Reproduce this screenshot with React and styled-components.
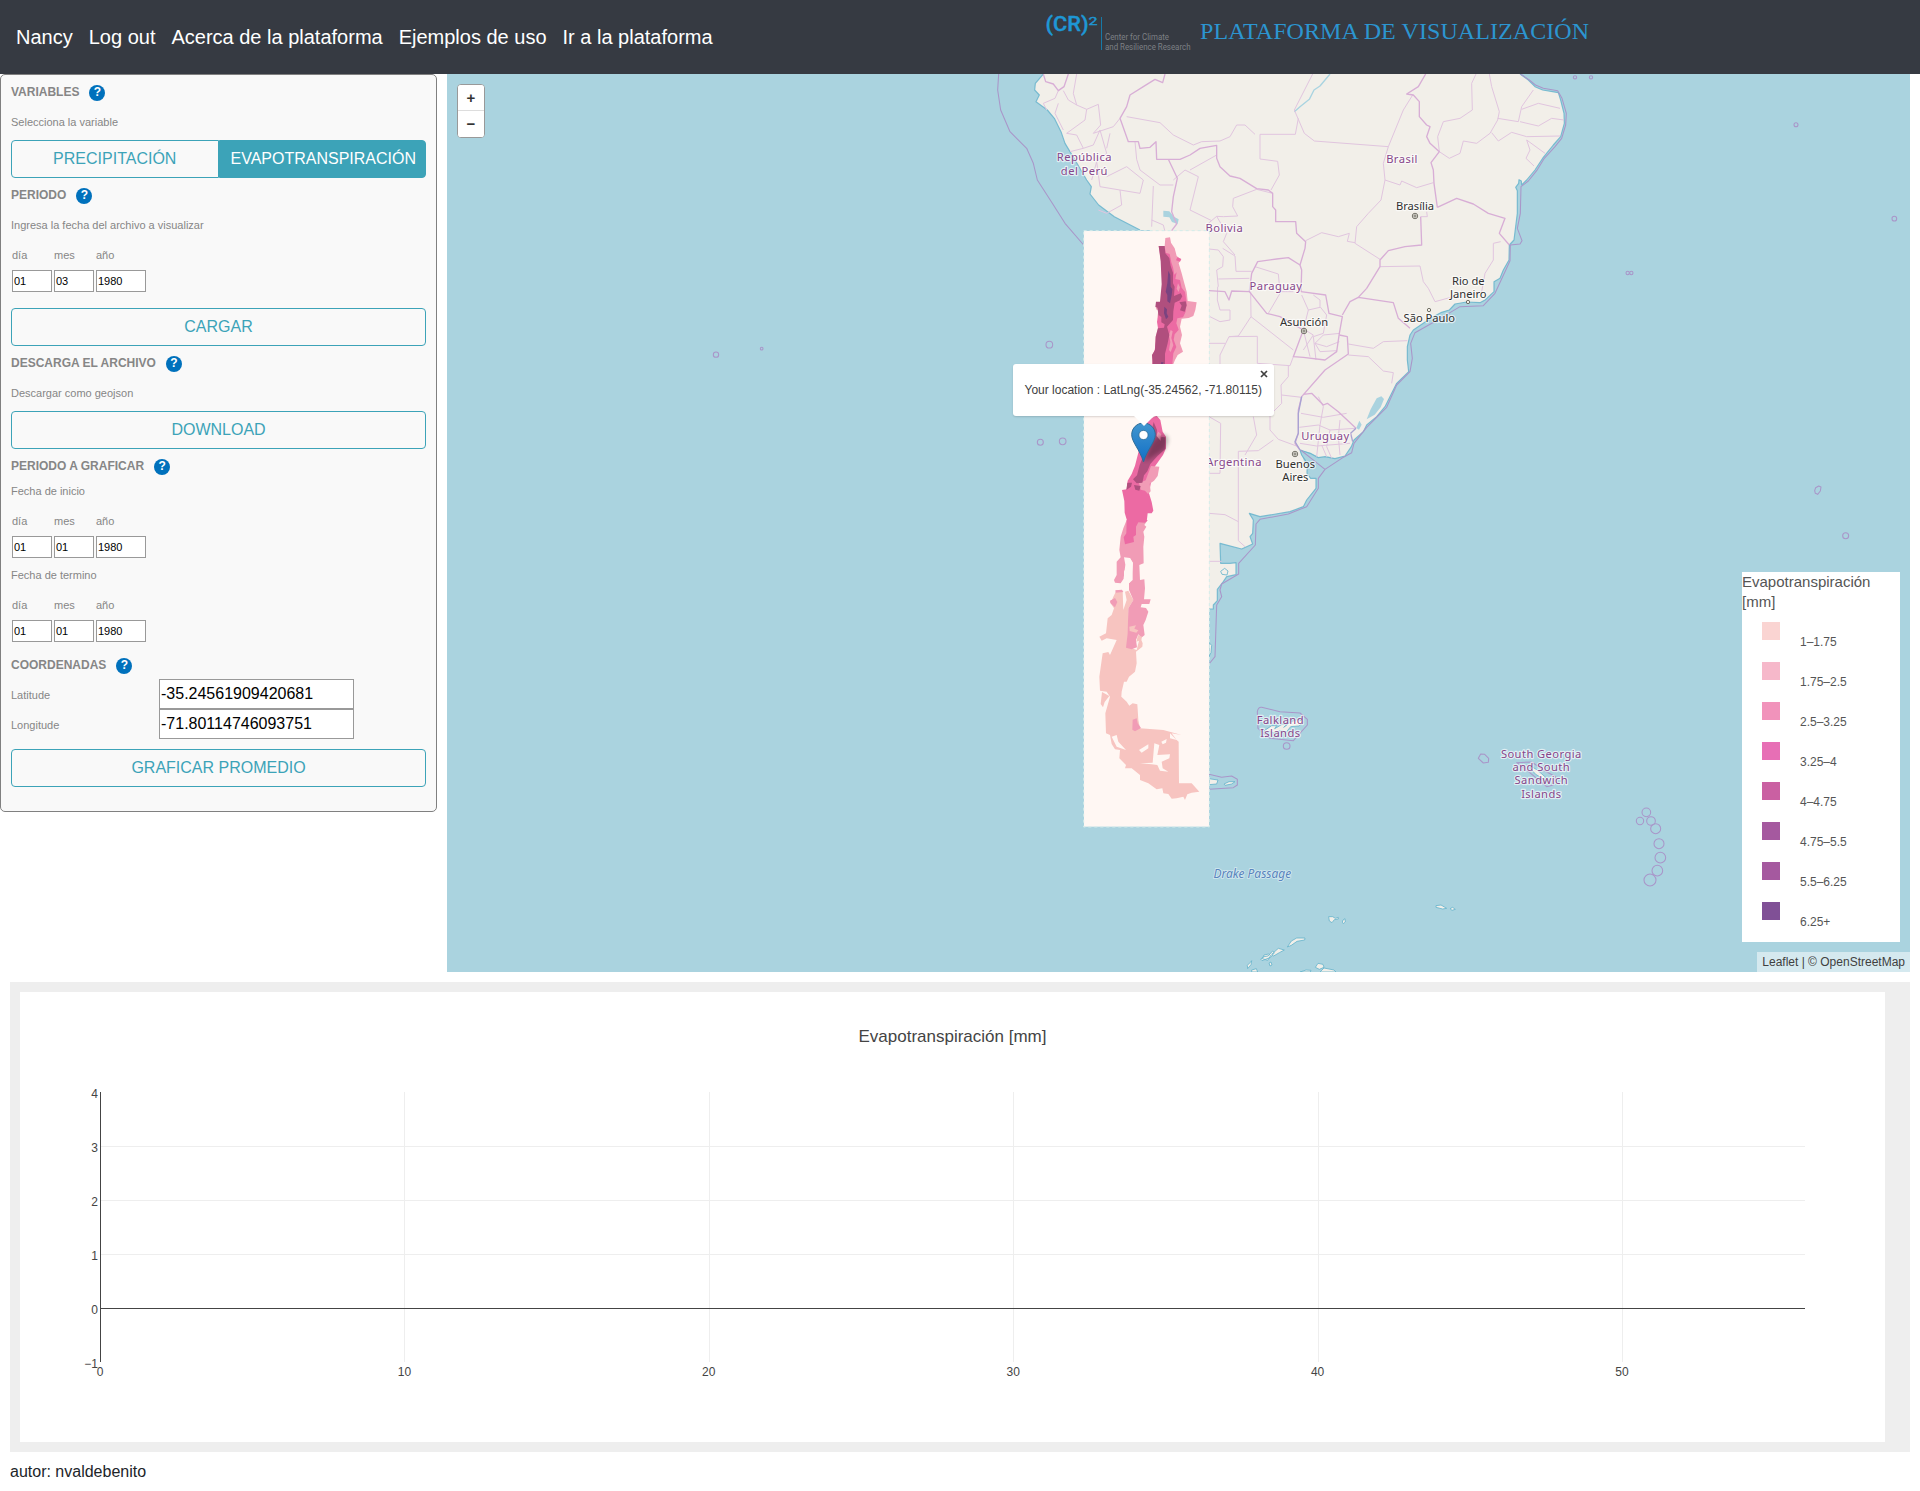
import React from 'react';
import styled, { createGlobalStyle, css } from 'styled-components';

const GlobalStyle = createGlobalStyle`
  *, *::before, *::after { box-sizing: border-box; }
  body { margin: 0; background: #fff; color: #212529; font: 16px/1.5 "Liberation Sans", Arial, sans-serif; }
  button, input { font-family: inherit; }
`;

const NavBar = styled.nav`
  display: flex; align-items: center; height: 74px; padding-left: 8px; background: #363a42;
`;
const NavLinks = styled.div`
  display: flex; width: 1038px;
`;
const NavLink = styled.a`
  padding: 0 8px; color: #fff; font-size: 20px; line-height: 30px; white-space: nowrap;
`;
const Brand = styled.div`
  display: flex; align-items: flex-start; height: 74px;
`;
const LogoArt = styled.svg`
  display: block; width: 154px; height: 60px; flex: none; overflow: visible;
`;
const BrandTitle = styled.span`
  padding-top: 13px; color: #2c95d0; font: 24px/36px "Liberation Serif", "Times New Roman", serif;
  letter-spacing: 0.08px; white-space: nowrap;
`;

const Workspace = styled.main`
  display: flex; align-items: flex-start; gap: 10px; width: 1910px;
`;
const Panel = styled.aside`
  display: flex; flex-direction: column; width: 437px; height: 738px; flex: none;
  padding: 0 10px 24px; border: 1px solid #808080; border-radius: 5px; background: #f9f9f9; color: #868686;
`;
const Heading = styled.h2`
  display: flex; align-items: center; gap: 10px; margin: ${p => (p.$tight ? '8px 0 0' : '0')};
  height: ${p => (p.$tight ? 29 : 34)}px; flex: none; font-size: 12px; font-weight: 700; line-height: 18px;
`;
const Help = styled.span`
  display: flex; justify-content: center; width: 16px; height: 16px; margin-top: 2px; border-radius: 50%;
  background: #0071bc; color: #fff; font-size: 12px; line-height: 14px;
`;
const Hint = styled.p`
  margin: 0 0 ${p => (p.$flush ? 0 : 5)}px; height: 26px; font-size: 11px; line-height: 26px; flex: none;
`;
const DateHint = styled(Hint)`
  height: 16px; line-height: 16px; margin-top: ${p => (p.$spaced ? 9 : 0)}px;
`;
const DateGrid = styled.div`
  display: grid; grid-template: 32px 22px / 40px 40px 50px; column-gap: 2px; padding-left: 1px;
  margin-bottom: ${p => p.$after || 0}px; font-size: 11px;
`;
const DateLabel = styled.label`
  padding-top: 2px; line-height: 30px;
`;
const field = css`
  border: 1px solid #999; border-radius: 0; background: #fff; color: #000; outline: 0; min-width: 0;
`;
const DateInput = styled.input`
  ${field} width: 100%; height: 22px; padding: 1px; font-size: 11px;
`;
const CoordRow = styled.div`
  display: flex; height: 30px; align-items: center; font-size: 11px;
`;
const CoordLabel = styled.label`
  width: 148px; padding-top: 2px;
`;
const CoordInput = styled.input`
  ${field} width: 195px; height: 30px; padding: 1px; font-size: 16px;
`;
const ButtonGroup = styled.div`
  display: flex; flex: none; margin-top: ${p => p.$top || 0}px;
`;
const Button = styled.button`
  flex: 1 1 0; min-width: 0; height: 38px; padding: 0 11px; border: 1px solid #3ca3b8; font-size: 16px;
  white-space: nowrap;
  background: ${p => (p.$active ? '#3ca3b8' : 'transparent')};
  color: ${p => (p.$active ? '#fff' : '#3ca3b8')};
  &:first-child { border-top-left-radius: 4px; border-bottom-left-radius: 4px; }
  &:last-child { border-top-right-radius: 4px; border-bottom-right-radius: 4px; }
`;

const MapFrame = styled.section`
  position: relative; flex: 1; height: 898px; overflow: hidden; background: #aad3df;
`;
const MapArt = styled.svg`
  display: block; width: 1463px; height: 898px;
`;
const ZoomControl = styled.div`
  position: absolute; left: 10px; top: 10px; width: 28px; height: 54px; border: 1px solid #999;
  border-radius: 4px; background: #fff; overflow: hidden;
`;
const ZoomButton = styled.button`
  display: block; width: 26px; height: 26px; padding: 0; border: 0; background: #fff;
  border-bottom: 1px solid ${p => (p.$last ? '#fff' : '#ddd')}; color: #333; font: 700 15px/24px "Liberation Sans", sans-serif;
`;
const Popup = styled.div`
  position: absolute; left: 566px; top: 290px; width: 261px; height: 52px; border-radius: 3px;
  background: #fff; color: #404040; font-size: 12px; line-height: 20px; padding: 16px 0 0 11.5px;
  box-shadow: 0 1px 2px rgba(0, 0, 0, 0.15); white-space: nowrap;
`;
const CloseIcon = styled.svg`
  position: absolute; right: 6px; top: 6px; width: 8px; height: 8px;
`;
const Tip = styled.svg`
  position: absolute; left: 121px; top: 52px; width: 20px; height: 10px;
`;
const MarkerIcon = styled.svg`
  position: absolute; left: 684px; top: 348px; width: 60px; height: 42px;
`;
const Legend = styled.div`
  position: absolute; right: 10px; bottom: 30px; width: 158px; height: 370px; background: #fff; color: #555;
`;
const LegendTitle = styled.div`
  height: 50px; font-size: 15px; line-height: 20px;
`;
const LegendItem = styled.div`
  display: flex; gap: 20px; height: 40px; padding-left: 20px; font-size: 12px; line-height: 40px;
`;
const Swatch = styled.i`
  width: 18px; height: 18px; background: ${p => p.$color};
`;
const Attribution = styled.div`
  position: absolute; right: 0; bottom: 0; height: 20px; padding: 0 5px; background: rgba(255, 255, 255, 0.5);
  color: #404040; font-size: 12px; line-height: 20px; white-space: nowrap;
`;

const ChartFrame = styled.section`
  width: 1900px; height: 470px; margin: 10px 0 0 10px; padding: 10px; background: #eee;
`;
const ChartArt = styled.svg`
  display: block; width: 1865px; height: 450px; background: #fff;
  text { font: 12px "Liberation Sans", Arial, sans-serif; fill: #444; }
  text.title { font-size: 17px; }
`;
const Footer = styled.footer`
  padding: 8px 10px 7px; line-height: 24px;
`;

const LEGEND = [
  ['1–1.75', '#fad4d2'], ['1.75–2.5', '#f6b8ca'], ['2.5–3.25', '#f193bb'], ['3.25–4', '#e76fb5'],
  ['4–4.75', '#ca60a2'], ['4.75–5.5', '#a5599f'], ['5.5–6.25', '#a5599f'], ['6.25+', '#805096'],
];

const Logo = () => (
  <LogoArt viewBox="1046 0 154 60">
    <g fill="#1e97d5" stroke="#1e97d5" strokeWidth="0.4" fontFamily="Roboto, sans-serif">
      <text x="1045.5" y="31" fontSize="20" fontWeight="500" textLength="43" lengthAdjust="spacingAndGlyphs">(CR)</text>
      <text x="1088.5" y="25" fontSize="11.5" fontWeight="400" textLength="9" lengthAdjust="spacingAndGlyphs">2</text>
    </g>
    <path d="M1101.5 17v33" stroke="#1779a7" />
    <g fill="#7d8085" fontFamily="Roboto, sans-serif" fontSize="9">
      <text x="1105" y="39.8" textLength="64" lengthAdjust="spacingAndGlyphs">Center for Climate</text>
      <text x="1105" y="49.8" textLength="85.5" lengthAdjust="spacingAndGlyphs">and Resilience Research</text>
    </g>
  </LogoArt>
);

const COAST_EAST = 'M930 12L955 30 975 50 998 60 1045 68 1052 90 1062 130 1063 160 1052 200 1030 225 1000 262 975 300 950 330 935 345 934 333 927 329 926 340 917 352 922 362 922 430 917 470 912 510 898 525 897 570 880 600 870 625 852 635 852 665 825 690 810 698 770 696 735 702 718 720 695 727 670 740 640 760 610 780 600 795 592 830 592 870 596 905 560 940 545 970 525 1010 500 1040 470 1065 460 1085 432 1110 424 1130 405 1158 375 1166 345 1160 325 1163 300 1150 270 1140';
const COAST_PLATA = 'L275 1155 292 1180 291 1210 302 1225 318 1225 318 1255 290 1290 280 1310 240 1325 150 1340 118 1330 130 1350 128 1390 120 1400 128 1422 95 1437 30 1420 32 1480 60 1480 78 1478 78 1514 50 1520 40 1535 22 1558 22 1592 10 1605 10 1617 -3 1617';
const COAST_WEST = '-210 480 -287 440 -334 405 -360 372 -356 350 -370 330 -393 290 -411 260 -435 220 -447 185 -467 145 -488 120 -522 95 -512 75 -526 60 -524 40 -500 12';

const BORDERS_THICK = [
  'M-500 12L-493 35-470 42-455 62-438 50-425 12M-135 12L-142 38-165 28-200 50-240 75-250 110-270 145-245 215-215 215-210 235-180 232-162 215-160 268-90 268-60 255-30 235 20 226 20 265 30 290 60 318 90 325 140 356 175 360 188 370 188 410 197 420 197 455 257 455 260 490 287 515 285 535 270 585 275 600 273 665',
  'M-125 268L-98 325-110 380-115 425-100 462-115 482M270 585L235 563 200 567 143 575 125 610 118 665 170 730 210 740 280 780 250 860 280 862 345 870 380 845 388 790 397 740 357 730 347 675 273 665',
  'M-3 662L45 665 57 690 65 663 118 665M388 795L412 800 415 852 345 900 275 980 265 1020 265 1090 255 1120 270 1140M280 973L305 970 340 1005 352 1000 385 1025 438 1075',
  'M647 12L625 50 590 72 610 75 628 95 628 140 650 165 660 170 650 200 660 220 688 245 663 278 670 300 672 340 682 412',
  'M682 412L740 385 790 402 835 430 885 445 868 490 898 525M632 440L635 525 585 530 535 542 510 570 510 590 470 655 445 682 420 695 397 735M445 682L550 698 565 745 600 775',
];
const BORDERS_THIN = [
  'M308 12L253 120 283 190 313 213 535 230 580 120 608 75M265 145L256 193 150 193 150 267 203 274 208 315 183 360M-250 140L-150 158-110 195-50 225-25 215 30 213 60 200 80 165 105 165 135 193',
  'M535 230L520 280 525 330 570 345 575 333 620 353 670 338M525 330L513 390 475 430 440 470 435 520 510 568M287 512L335 488 385 500 418 490 412 514 435 518',
  'M798 12L785 40 787 120 750 145 700 155 683 200 688 245 718 265 750 250 760 213 800 220 840 190 863 150 868 125 845 50 838 12M863 145L925 155 935 110 970 60M930 155L985 168 1025 145 1062 150M935 118L985 100 1050 115M845 188L865 213 905 187 950 200 1050 198M950 210L1005 250M950 210L960 240 948 265 972 288',
  'M510 590L630 588 640 635 655 655 675 695 730 680M872 515L850 520 850 570 825 610 815 665 780 675M632 440L652 440 650 425',
  'M415 822L490 835 520 815 592 812M415 855L475 860 520 903 550 908 545 940M275 675L295 720 280 780 300 860M310 675L330 690 330 710 350 735 340 790 310 800 318 870M295 720L330 712M390 790L340 795 315 820 350 830 388 815M315 820L330 845 380 842M285 780L310 795 280 840',
  'M-3 537L25 540 40 560 38 590 20 600 25 650M38 535L75 558 78 604 125 604M25 627L118 625M135 590L205 612 210 665M210 665L250 665M210 670L175 730M122 665L123 740 250 840M23 650L22 690 30 720 60 720 60 750 30 755 0 740M123 740L85 798 57 800 30 855 30 882M57 800L142 799 142 880 240 887 250 860M-3 820L45 820',
  'M235 887L235 920 213 945 215 1000 180 1035 180 1080 205 1108 265 1130M215 975L275 982M130 1040L140 1095 105 1155M-3 1040L32 1060 30 1210-3 1210M85 1570M85 1412L85 1144 145 1142 190 1110M-3 1330L45 1334 85 1355M85 1412L105 1430M-3 1474L35 1474',
  'M273 1030L340 1042 410 1030M268 1072L325 1065 360 1080 435 1075M325 980L340 1010 330 1065 320 1160M360 1080L350 1130 365 1165M390 1050L385 1100 390 1155M270 1120L320 1128 420 1120M335 1125L350 1160',
  'M188 370L140 358 70 385 68 410 83 438 40 440 20 439-5 460M20 439L50 490 40 515 75 555',
  'M-400 12L-410 70-400 105-370 118-335 103-328 165-350 190-290 170-270 145M-400 105L-425 90-440 62M-455 62L-465 85-500 100-490 120M-370 118L-375 150-430 190M-430 190L-400 195-380 235-420 245M-380 235L-350 225-330 180-310 250-340 275-355 330M-440 180L-465 130-455 100M-310 235L-300 190M-340 275L-330 350-270 360-265 405-310 430-335 420M-270 360L-210 370-200 330-250 290-310 320M-220 268L-210 300-150 345-110 345M-170 348L-175 470M-110 330L-75 300-35 320-60 420 5 452M-60 300L20 255M-175 450L-140 465-135 485M-225 215L-220 268',
];
const MARITIME = [
  'M-634 12L-637 60-628 120-600 185-550 235-530 280-518 330-474 398-435 460-379 525',
  'M932 12L958 30 978 46 1000 55 1043 62 1056 85 1069 130 1067 165 1055 205 1035 230 1003 265 980 302 955 333 933 350 931 430 922 475 936 512 930 522 901 525 900 572 885 605 855 670 820 707 750 710 700 740 615 788 602 820 607 865 600 905 560 945 530 1012 470 1072 432 1120 425 1148 395 1165 345 1198 272 1140',
  'M345 1198L325 1225 325 1255 290 1310 235 1332 150 1348 138 1362 136 1425 86 1480 86 1512 35 1542 30 1560 35 1580 20 1605 15 1760-3 1782',
  'M-3 2113L35 2122 65 2118 82 2128 82 2145 70 2153-3 2158M142 1925Q145 1910 155 1912L210 1925 270 1929 292 1948 292 1965 250 2012 180 2005 144 1975Z',
  'M805 2065l7-13 12 1 12 12-1 12-15 2ZM935 2088L920 2078 965 2076 1005 2103 1037 2120 1030 2145 1010 2150Z',
  'M1814 1262l3-9 9-5 7 3-2 12-8 10-7-3Z',
];
const ISLETS = [
  [1309, 2227, 13], [1290, 2253, 11], [1323, 2253, 13], [1337, 2276, 15], [1347, 2321, 15],
  [1351, 2363, 16], [1342, 2402, 16], [1320, 2430, 18], [-509, 1117, 9], [-442, 1114, 10], [-482, 824, 10],
  [-1482, 854, 8], [-1345, 836, 4], [1758, 164, 6], [2053, 446, 7], [1907, 1397, 9], [1095, 22, 5], [1143, 22, 5],
  [230, 2028, 10], [1253, 609, 5], [1264, 609, 5],
];

const COUNTRIES = [
  [-377, 274, ['República', 'del Perú']], [576, 280, ['Brasil']], [43, 486, ['Bolivia']], [198, 661, ['Paraguay']],
  [346, 1109, ['Uruguay']], [72, 1189, ['Argentina']], [211, 1961, ['Falkland', 'Islands']],
  [994, 2063, ['South Georgia', 'and South', 'Sandwich', 'Islands']],
];
const CITIES = [
  [615, 420, ['Brasília']], [775, 645, ['Rio de', 'Janeiro']], [658, 757, ['São Paulo']],
  [282, 767, ['Asunción']], [256, 1194, ['Buenos', 'Aires']],
];

function PlaceLabels({ places, color, spacing }) {
  return places.map(([x, y, lines]) => (
    <text key={lines[0]} textAnchor="middle" fill={color} fontSize="33.5" letterSpacing={spacing}
      stroke="#fff" strokeOpacity="0.65" strokeWidth="7" strokeLinejoin="round" paintOrder="stroke" fontFamily='"Noto Sans", sans-serif'>
      {lines.map((line, i) => <tspan key={line} x={x} y={y + i * 40.2}>{line}</tspan>)}
    </text>
  ));
}

function RasterLayer() {
  return (
    <g>
      <rect x="-378" y="483" width="375" height="1787" fill="#fff7f3" />
      <rect x="-379" y="482" width="377" height="1789" fill="none" stroke="#d4ecea" strokeWidth="3" strokeDasharray="9 9" />
      <g transform="translate(-630 450)">
        <path fill="#f19cb6" d="M496 54l14-2 3 16 11 17 6 23 13 10-7 12 9 30 8 30 7 25 3 28 27 4-4 23-6 18-14 6-21 2-5 24 6 25-6 25 9 25-16 10-8 15-5 12-62 0-2-27 9-15 2-40 8-30-3-25 3-25-7-2 2-16 12 0 5-52-3-70-8-52 18 0Z" />
        <path fill="#ec6aa3" d="M494 78l3 20 12 4 5 25 5 15 4 22 7-7-4 20 14 3 5 23 10 13 5 31-3 28-8 17-17 3-3 15 7 19-12 14-3 16 8 22-9 19-3 32-60 0 20-120 10-100Z" />
        <path fill="#ec6aa3" d="M532 112l12 5-4 8-12-4Z" />
        <path fill="#f19cb6" d="M512 330l6 4-4 20 6 22-8 20-5-6 4-24-4-20ZM534 190l6 12-4 14-6-10Z" />
        <path fill="#b04f7e" d="M476 78l18 0 2 22 12 14 4 24 7 20 0 32 5 10-2 28 20-8 5 9-7 12-16 7-4 26-1 26-18 20 7 25-5 25-8 31 0 31-37 0-2-27 9-15 2-40 8-30 1-25-2-20-2-12-6-2 2-16 12 0 5-52-3-70Z" />
        <path fill="#ec6aa3" d="M476 285l8 6 0 16 10 6-2 10-18 2-3-20Z" />
        <path fill="#b04f7e" d="M538 247l19-3 3 12-6 19-14-4 5-14Z" />
        <path fill="#7a4380" d="M505 152l6 13 1 35 5 8-2 18-5 24-8-6 0-19-5-10 5-25ZM493 260l8 8-1 12 5 10-7 8-6-18ZM483 427l8 0-3 7-5-2Z" />
        <path fill="#ec6aa3" d="M440 600l30-13 11 13 7 35 10 15 0 35-9 20-25 35-7 25-10 55 8 26 5 26-5 8-12 0-3 25-57 3-9-30-1-35-7-33 14-2 3-26 12-20 10-25Z" />
        <path fill="#f19cb6" d="M475 635l9 8-7 20-14-7ZM453 738l25 2-5 28-11 14-13 9 3 23-8 8-9-10-13-3-5-20 20-8Z" />
        <path fill="#b04f7e" d="M461 606l10 24-1 18 12 15 2-12 12 1 0 35-23 20-22 25-9 22-10 12-5 22-17 2-11-12 12-12 8-31 25-60ZM382 788l14 0-3 12-14 10ZM402 795l20 3-4 14-12-3Z" />
      </g>
      <g transform="translate(-630 1350)">
        <path fill="#f7c4c0" fillRule="evenodd" d="M340 230L350 210 368 215 370 270 380 240 375 215 385 212 400 240 385 265 385 300 383 380 410 390 420 350 428 370 427 380 408 395 410 430 405 455 387 470 380 485 372 485 365 515 364 530 380 545 388 557 398 550 412 553 415 600 420 625 490 630 545 645 515 640 530 660 536 665 537 790 575 790 598 815 575 818 562 823 555 840 550 830 530 835 515 836 505 822 490 820 487 805 470 808 445 790 420 780 420 765 395 745 375 745 378 735 358 715 360 690 345 688 335 672 330 645 318 640 316 580 330 530 320 515 300 512 298 470 308 400 325 396 330 405 350 360 320 355 305 362 298 350 318 340 323 295 335 285 342 265 332 250ZM417 690L445 673 445 685 425 698ZM463 670L478 675 472 705 510 703 508 715 485 725 488 745 505 755 480 752 472 735 455 733 420 730 458 728ZM484 665L500 657 498 668 488 673ZM335 650L350 645 355 665 378 690 350 680ZM510 640L530 660 510 655Z" />
        <path fill="#f7c4c0" d="M306 516l22 12-14 18-5 16-7-10Z" />
        <path fill="#f19cb6" d="M380 0L443 0 433 15 439 20 430 35 433 50 430 80 431 130 418 135 420 180 433 178 435 205 432 238 452 238 448 252 425 252 422 262 438 264 445 275 437 300 430 315 434 345 424 353 415 343 408 360 411 382 395 388 378 383 383 340 385 265 400 240 387 210 387 190 398 180 398 130 390 115 377 118 382 135 372 155 372 175 362 190 345 188 342 180 350 165 350 125 362 112 358 90 362 50 370 25Z" />
        <path fill="#fff7f3" d="M372 112l18 2 9 14-5 52-17 24-6-30 5-40Z" />
        <path fill="#ec6aa3" d="M380 0L443 0 435 8 415 7 408 20 408 45 400 50 402 66 375 73 371 52 379 40Z" />
        <path fill="#f19cb6" d="M346 211l20-2 4 7-23 2ZM330 242l15-8 7 12-7 16-14-13ZM398 599l12-4 3 15 10 14-18 10-8-5Z" />
        <path fill="#f7c4c0" d="M388 320l20-4-5 10 12 5-6 7-20-5ZM414 345l12 5-2 10-15 5Z" />
      </g>
    </g>
  );
}

function BaseMap() {
  return (
    <MapArt viewBox="-2289 12 4389 2694">
      <path fill="#f2efe9" d={`${COAST_EAST}${COAST_PLATA}L-180 1617-180 480 ${COAST_WEST}Z`} />
      <g fill="#aad3df">
        <path d="M500 985l14-6 8 8-10 25-18 22-24 14 12-30ZM448 1052l7 12-8 15-8-5ZM-140 422l18 2 14 16 14 8-3 14-17-6-8-14-18-2Z" />
        <path d="M270 1140l32 8 25 14 30-2 20 8 20-1-52 31-20 22-15 4-9-8 2-20-20-20Z" />
      </g>
      <g fill="none" strokeLinejoin="round">
        <g stroke="#68b4cc" strokeWidth="3.5" opacity="0.85">
          <path d={COAST_EAST} />
          <path d={`M${COAST_WEST}`} />
          <path d={`M270 1140${COAST_PLATA}`} />
        </g>
        <path d="M360 12L330 48 312 60 298 88 270 110 253 125" stroke="#a9d4e1" strokeWidth="4" />
        <g stroke="#e1c5df" strokeWidth="3">{BORDERS_THIN.map(d => <path key={d} d={d} />)}</g>
        <g stroke="#d8aed6" strokeWidth="4">{BORDERS_THICK.map(d => <path key={d} d={d} />)}</g>
        <path d="M275 980L265 1030 265 1090 255 1115 270 1140M438 1075L422 1090 428 1115" stroke="#a9a2d3" strokeWidth="4" />
        <g stroke="#a996c9" strokeWidth="3.2">
          {MARITIME.map(d => <path key={d} d={d} />)}
          {ISLETS.map(([x, y, r]) => <circle key={`${x},${y}`} cx={x} cy={y} r={r} />)}
        </g>
      </g>
      <g fill="#f2efe9" stroke="#68b4cc" strokeWidth="2.5">
        <path d="M-3 2126l27 4-4 12-23 2ZM42 2142l15-7 18 0-10 7-20 4ZM-3 1718l8 8-2 22-6 12ZM32 1504l12-9 10 8-3 12-15-2Z" />
        <path d="M356 2540l12 0 8 5 9-3 0 5-12 2-7 9-8-5ZM399 2550l6-4 1 10-6 5-3-5ZM678 2507l15-2 17 10-12 2-20-5ZM720 2516l8-4 8 6-10 3Z" />
        <path d="M232 2631l12-18 16-9 25 0-1 6-23 4-17 12ZM152 2667l10-7 12-2 14-15 5 5-11 14-26 10ZM162 2655l14-3 6 5-9 14-16-5ZM185 2653l20-18 18 5-15 8-17 10ZM112 2686l9-9 4-5-2 12-10 12ZM125 2700l14-4 4 10-18 0ZM177 2679l6-3 3 9-6 3ZM316 2692l8-12 15 3 3 9-14 6ZM330 2706l12-12 30 6 6 6ZM270 2706l18-6 15 1-2 5Z" />
        <path d="M163 1982l22-15 15 0-6 9 24-14 13 1-10 9 22-17 22-7 16 8-14 12-25 2-12 15-20-3-20 7-10-6-14 4ZM962 2088l20 12 25 22-8 4-22-13-16-18Z" />
      </g>
      <g fill="#f2efe9" stroke="#555449" strokeWidth="2.4">
        {[[615, 438], [282, 783], [255, 1152]].map(([x, y]) => (
          <g key={x}><circle cx={x} cy={y} r="8.2" /><circle cx={x} cy={y} r="3.4" /></g>
        ))}
        <circle cx="774" cy="696" r="5" /><circle cx="657" cy="720" r="5" />
      </g>
      <PlaceLabels places={COUNTRIES} color="#86468a" spacing="1.3" />
      <PlaceLabels places={CITIES} color="#303030" />
      <text x="127" y="2424" textAnchor="middle" fontFamily='"Noto Sans", sans-serif' fontStyle="italic" fontSize="36" fill="#5984bd" stroke="#fff" strokeOpacity="0.5" strokeWidth="5" paintOrder="stroke">Drake Passage</text>
      <RasterLayer />
    </MapArt>
  );
}

function Marker() {
  return (
    <MarkerIcon viewBox="0 0 60 42">
      <defs>
        <linearGradient id="pin" x1="0" y1="0" x2="0" y2="1"><stop stopColor="#4196cf" /><stop offset="1" stopColor="#126fc6" /></linearGradient>
        <filter id="soft" x="-20%" y="-20%" width="140%" height="140%"><feGaussianBlur stdDeviation="2" /></filter>
      </defs>
      <path d="M13 40L20 22Q27 11 34 13T33 28Z" fill="#000" opacity="0.28" filter="url(#soft)" />
      <path d="M12.5 1C6 1 .7 6.1.7 12.7.7 20 8.5 27 12.5 40c4-13 11.8-20 11.8-27.3C24.3 6.1 19 1 12.5 1Z" fill="url(#pin)" stroke="#2e6c97" />
      <circle cx="12.5" cy="13" r="4.6" fill="#fff" stroke="#2e6c97" strokeWidth="0.8" />
    </MarkerIcon>
  );
}

function DateFields({ values, after }) {
  return (
    <DateGrid $after={after}>
      {['día', 'mes', 'año'].map(label => <DateLabel key={label}>{label}</DateLabel>)}
      {values.map((value, i) => <DateInput key={i} defaultValue={value} />)}
    </DateGrid>
  );
}

const Section = ({ children, tight }) => <Heading $tight={tight}>{children}<Help>?</Help></Heading>;

function Chart() {
  const x = n => 80.5 + n * 30.44;
  const y = n => 316.5 - n * 54;
  return (
    <ChartFrame>
      <ChartArt viewBox="0 0 1865 450">
        <text className="title" x="932.5" y="50" textAnchor="middle">Evapotranspiración [mm]</text>
        <g stroke="#eee" shapeRendering="crispEdges">
          {[10, 20, 30, 40, 50].map(n => <path key={n} d={`M${x(n)} 100V370`} />)}
          {[1, 2, 3].map(n => <path key={n} d={`M80 ${y(n)}H1785`} />)}
        </g>
        <path d="M80.5 100V370M80 316.5H1785" stroke="#444" fill="none" />
        {[0, 10, 20, 30, 40, 50].map(n => <text key={n} x={x(n) - 0.5} y="384" textAnchor="middle">{n}</text>)}
        {[-1, 0, 1, 2, 3, 4].map(n => <text key={n} x="78" y={y(n) + 5.5} textAnchor="end">{n < 0 ? '−1' : n}</text>)}
      </ChartArt>
    </ChartFrame>
  );
}

export default function App() {
  return (
    <>
      <GlobalStyle />
      <NavBar>
        <NavLinks>
          {['Nancy', 'Log out', 'Acerca de la plataforma', 'Ejemplos de uso', 'Ir a la plataforma'].map(t => <NavLink key={t}>{t}</NavLink>)}
        </NavLinks>
        <Brand><Logo /><BrandTitle>PLATAFORMA DE VISUALIZACIÓN</BrandTitle></Brand>
      </NavBar>
      <Workspace>
        <Panel>
          <Section>VARIABLES</Section>
          <Hint>Selecciona la variable</Hint>
          <ButtonGroup><Button>PRECIPITACIÓN</Button><Button $active>EVAPOTRANSPIRACIÓN</Button></ButtonGroup>
          <Section>PERIODO</Section>
          <Hint $flush>Ingresa la fecha del archivo a visualizar</Hint>
          <DateFields values={['01', '03', '1980']} after={16} />
          <ButtonGroup><Button>CARGAR</Button></ButtonGroup>
          <Section>DESCARGA EL ARCHIVO</Section>
          <Hint>Descargar como geojson</Hint>
          <ButtonGroup><Button>DOWNLOAD</Button></ButtonGroup>
          <Section>PERIODO A GRAFICAR</Section>
          <DateHint>Fecha de inicio</DateHint>
          <DateFields values={['01', '01', '1980']} />
          <DateHint $spaced>Fecha de termino</DateHint>
          <DateFields values={['01', '01', '1980']} />
          <Section tight>COORDENADAS</Section>
          <CoordRow><CoordLabel>Latitude</CoordLabel><CoordInput defaultValue="-35.24561909420681" /></CoordRow>
          <CoordRow><CoordLabel>Longitude</CoordLabel><CoordInput defaultValue="-71.80114746093751" /></CoordRow>
          <ButtonGroup $top={10}><Button>GRAFICAR PROMEDIO</Button></ButtonGroup>
        </Panel>
        <MapFrame>
          <BaseMap />
          <ZoomControl><ZoomButton>+</ZoomButton><ZoomButton $last>−</ZoomButton></ZoomControl>
          <Marker />
          <Popup>
            Your location : LatLng(-35.24562, -71.80115)
            <CloseIcon viewBox="0 0 8 8"><path d="M1 1l6 6M7 1L1 7" stroke="#404040" strokeWidth="1.7" /></CloseIcon>
            <Tip viewBox="0 0 20 10"><path d="M0 0h20l-10 10z" fill="#fff" /></Tip>
          </Popup>
          <Legend>
            <LegendTitle>Evapotranspiración<br />[mm]</LegendTitle>
            {LEGEND.map(([label, color]) => <LegendItem key={label}><Swatch $color={color} />{label}</LegendItem>)}
          </Legend>
          <Attribution>Leaflet | © OpenStreetMap</Attribution>
        </MapFrame>
      </Workspace>
      <Chart />
      <Footer>autor: nvaldebenito</Footer>
    </>
  );
}
